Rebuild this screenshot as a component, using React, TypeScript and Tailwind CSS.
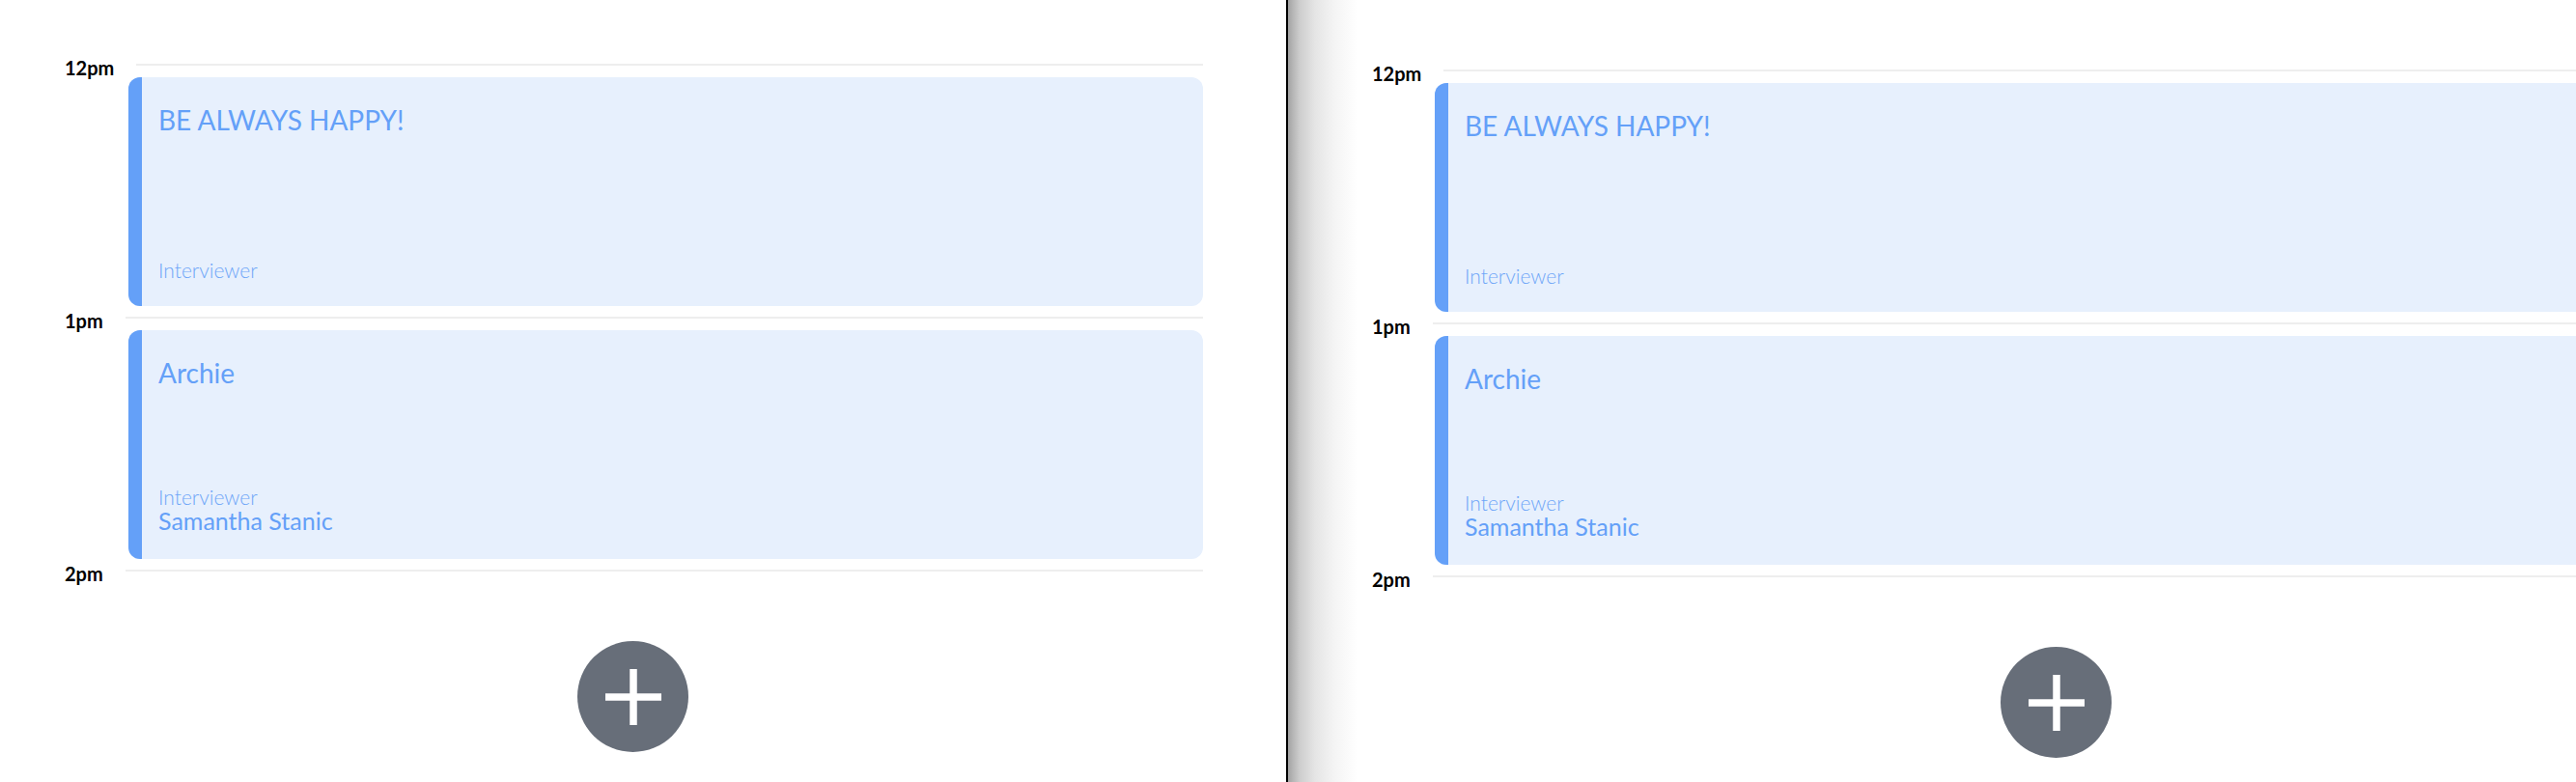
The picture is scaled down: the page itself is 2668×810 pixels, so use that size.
import React from "react";

type Ev = { title: string; name?: string };

const HourRow = ({ label }: { label: string }) => (
  <div className="flex h-[20px] items-start gap-[23px]">
    <span className="text-[20px] font-bold leading-none text-black">{label}</span>
    <div className="mt-[6px] h-[2px] flex-1 bg-[#eeeeee]" />
  </div>
);

const Card = ({ ev, cardLeft }: { ev: Ev; cardLeft: number }) => (
  <div
    className="flex h-[237px] overflow-hidden rounded-[12px] bg-[#e7f0fd]"
    style={{ marginLeft: cardLeft }}
  >
    <div className="w-[14px] shrink-0 bg-[#64a0f8]" />
    <div className="flex flex-1 flex-col justify-between pb-[27px] pl-[17px] pt-[30px] text-[#64a0f8]">
      <div className="text-[28px] leading-none">{ev.title}</div>
      <div className="flex flex-col">
        <div className="text-[21px] font-light leading-none text-[#6ea6f8]">Interviewer</div>
        {ev.name ? <div className="mt-[2px] text-[25px] leading-none">{ev.name}</div> : null}
      </div>
    </div>
  </div>
);

const events: Ev[] = [
  { title: "BE ALWAYS HAPPY!" },
  { title: "Archie", name: "Samantha Stanic" },
];

const Fab = ({ left }: { left: number }) => (
  <div className="mt-[60px] flex" style={{ paddingLeft: left }}>
    <button className="flex h-[115px] w-[115px] items-center justify-center rounded-full bg-[#676e79]">
      <svg width="58" height="58" viewBox="0 0 58 58">
        <line x1="29" y1="0" x2="29" y2="58" stroke="white" strokeWidth="7.5" />
        <line x1="0" y1="29" x2="58" y2="29" stroke="white" strokeWidth="7.5" />
      </svg>
    </button>
  </div>
);

const Timeline = ({
  labelLeft,
  cardLeft,
  top,
  fabLeft,
  rightPad,
}: {
  labelLeft: number;
  cardLeft: number;
  top: number;
  fabLeft: number;
  rightPad: number;
}) => (
  <div className="flex flex-col" style={{ paddingTop: top, paddingRight: rightPad }}>
    {events.map((ev, i) => (
      <div key={i} className="flex h-[262px] flex-col">
        <div style={{ paddingLeft: labelLeft }}>
          <HourRow label={i === 0 ? "12pm" : "1pm"} />
        </div>
        <Card ev={ev} cardLeft={cardLeft} />
      </div>
    ))}
    <div style={{ paddingLeft: labelLeft }}>
      <HourRow label="2pm" />
    </div>
    <Fab left={fabLeft} />
  </div>
);

export default function App() {
  return (
    <div
      className="flex h-[810px] w-[2668px] overflow-hidden bg-white"
      style={{ fontFamily: "Lato, 'Noto Sans', sans-serif" }}
    >
      <div className="w-[1332px] shrink-0 bg-white">
        <Timeline labelLeft={67} cardLeft={133} top={60} fabLeft={598} rightPad={86} />
      </div>
      <div className="flex-1 overflow-hidden border-l-2 border-black bg-[linear-gradient(to_right,#a4a4a4_0px,#cdcdcd_12px,#e5e5e5_28px,#f4f4f4_48px,#ffffff_72px)]">
        <div className="w-[1571px]">
          <Timeline labelLeft={87} cardLeft={152} top={66} fabLeft={738} rightPad={86} />
        </div>
      </div>
    </div>
  );
}
